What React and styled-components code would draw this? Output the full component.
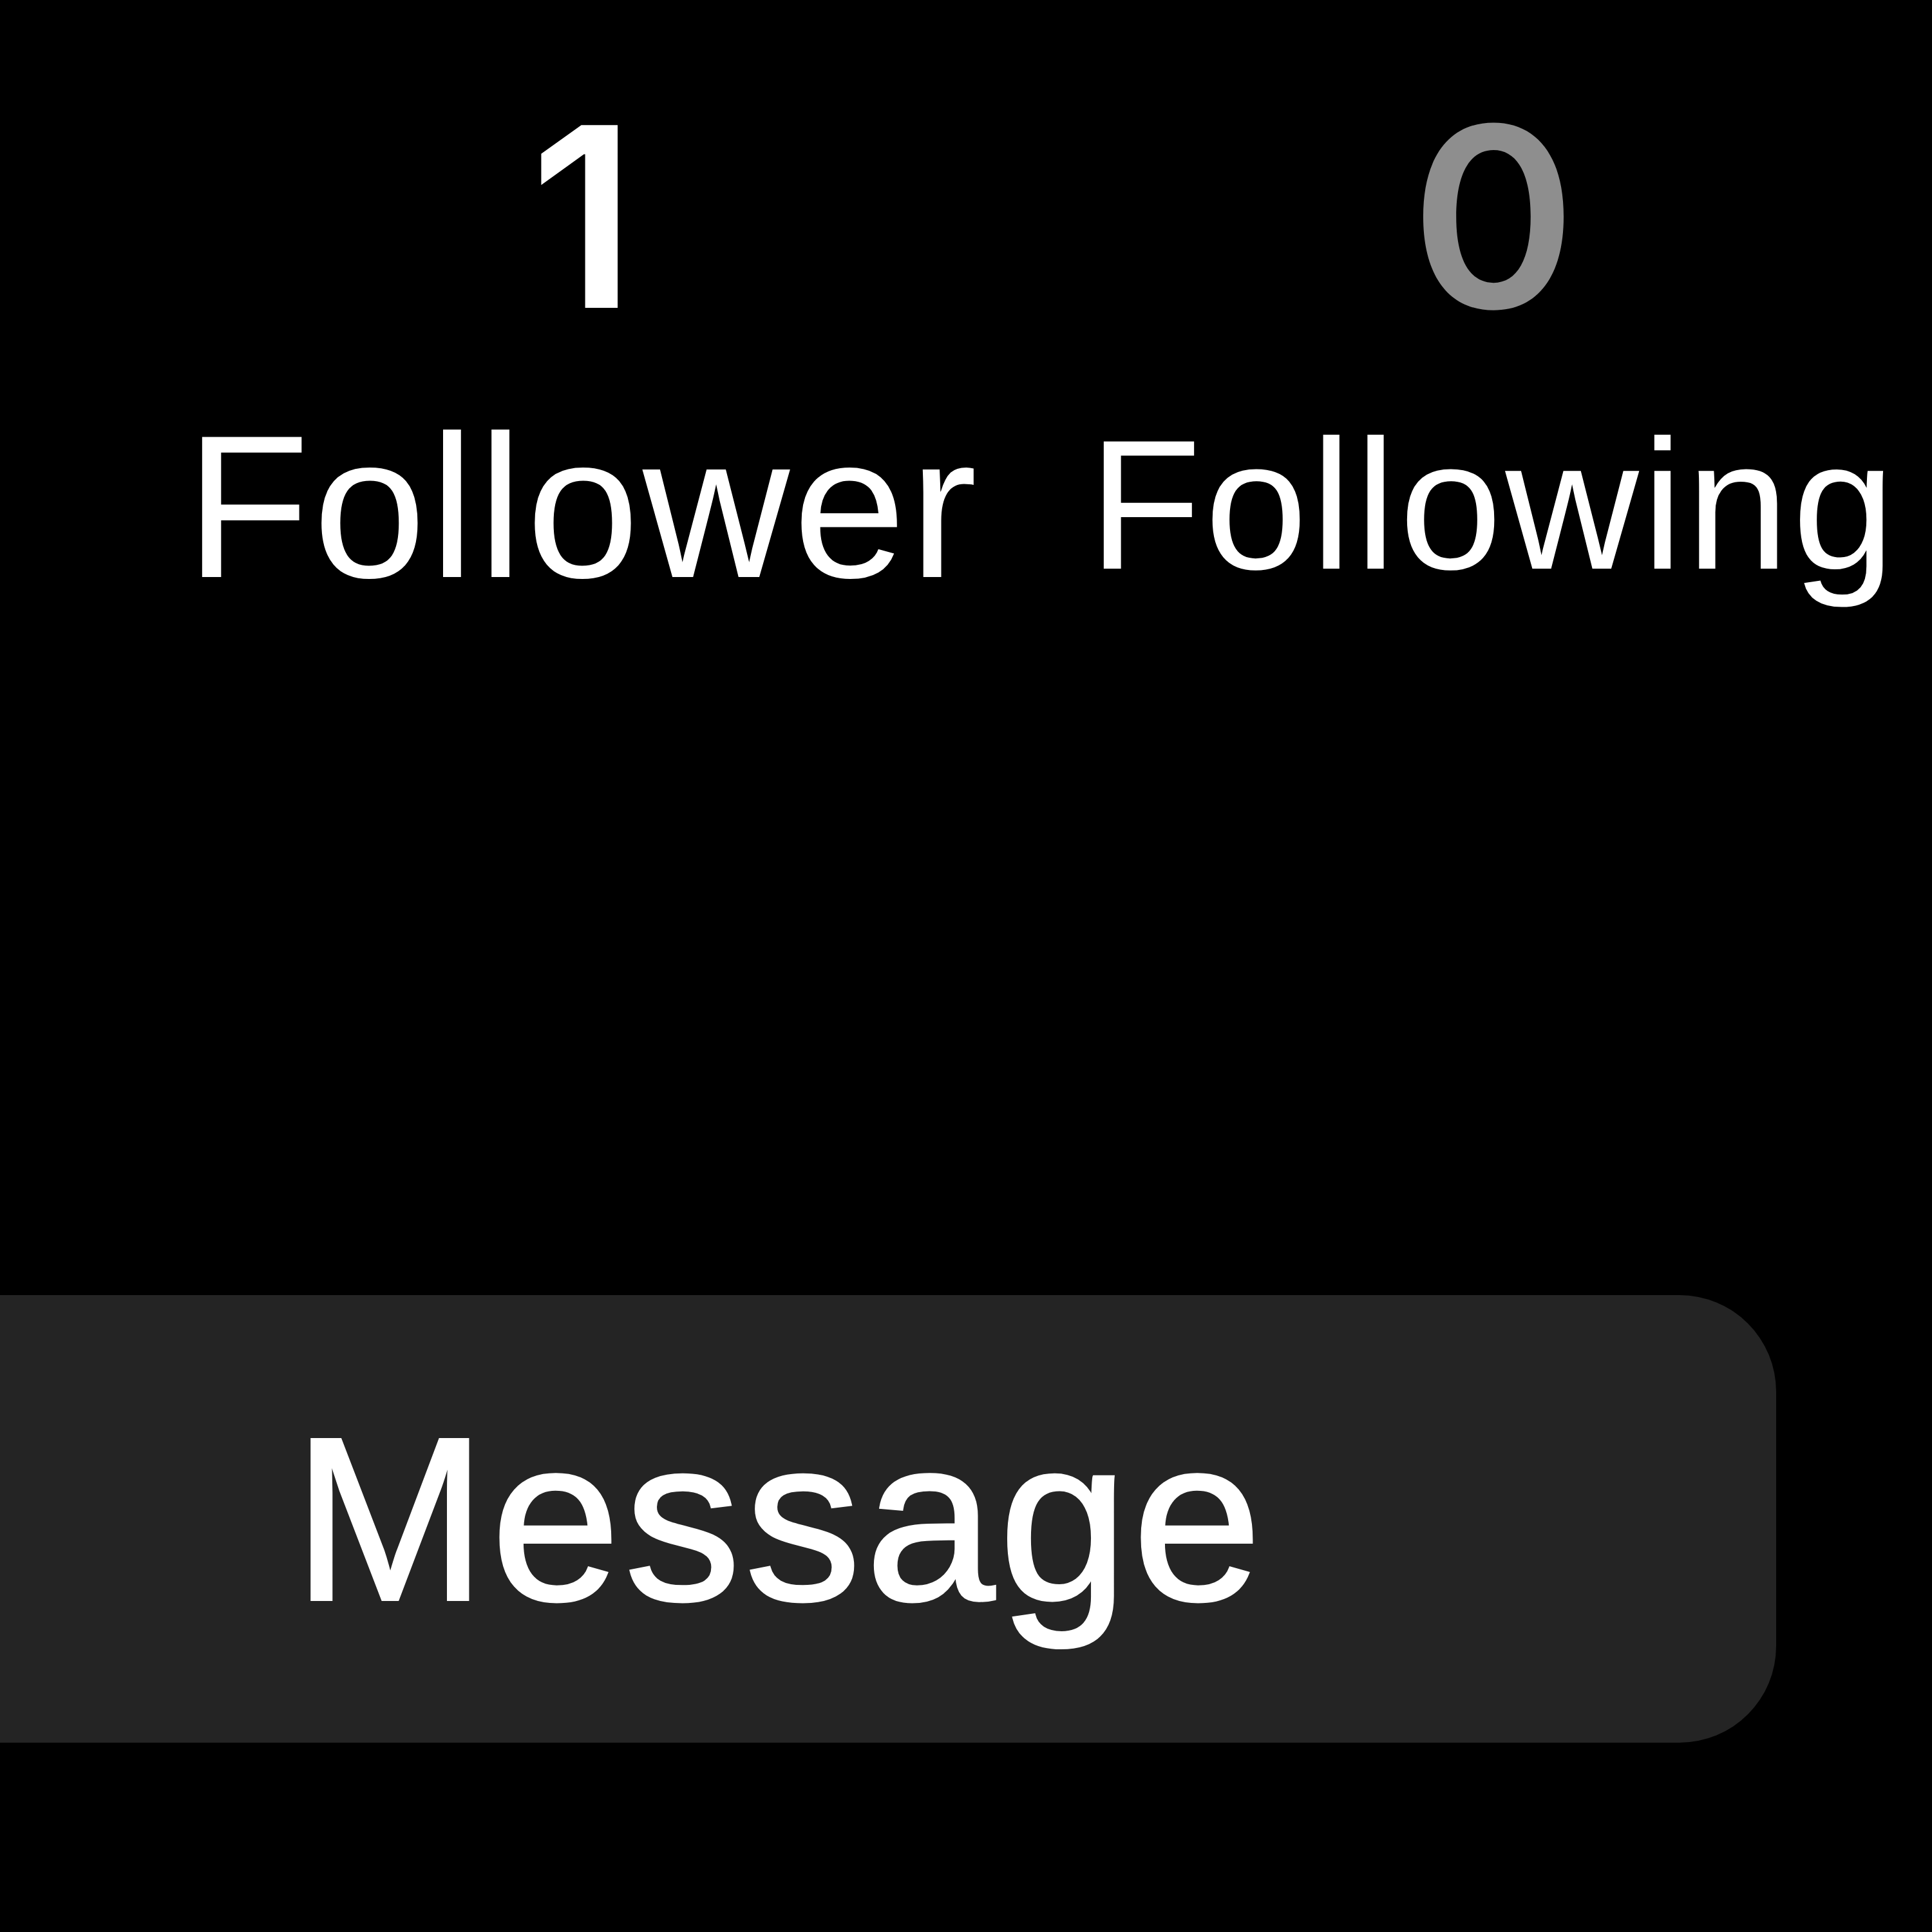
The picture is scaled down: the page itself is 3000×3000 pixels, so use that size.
import styled, { createGlobalStyle } from "styled-components";

const GlobalStyle = createGlobalStyle`
  html, body {
    margin: 0;
    padding: 0;
    background: #000;
    overflow: hidden;
  }
  #root {
    width: 3000px;
    height: 3000px;
    overflow: hidden;
  }
`;

const stats = [
  { value: "1", label: "Follower", muted: false, size: 316, offset: 98 },
  { value: "0", label: "Following", muted: true, size: 287, offset: 109 },
];

const App = () => {
  return (
    <Page>
      <GlobalStyle />
      <Stats>
        {stats.map((s) => (
          <Stat key={s.label}>
            <Count $muted={s.muted}>{s.value}</Count>
            <Label $size={s.size} $offset={s.offset}>
              {s.label}
            </Label>
          </Stat>
        ))}
      </Stats>
      <MessageButton>Message</MessageButton>
    </Page>
  );
};

const Page = styled.div`
  width: 3000px;
  height: 3000px;
  background: #000;
  display: flex;
  flex-direction: column;
  font-family: "Liberation Sans", Arial, sans-serif;
  color: #fff;
`;

const Stats = styled.div`
  display: grid;
  grid-template-columns: 1400px 1400px;
  column-gap: 14px;
  padding-left: 205px;
  padding-top: 141px;
  height: 790px;
  align-items: start;
`;

const Stat = styled.div`
  display: flex;
  flex-direction: column;
  align-items: center;
`;

const Count = styled.div`
  font-family: Inter, "Liberation Sans", sans-serif;
  font-weight: 600;
  font-size: 390px;
  line-height: 1;
  color: ${(p) => (p.$muted ? "#8e8e8e" : "#fff")};
`;

const Label = styled.div`
  font-size: ${(p) => p.$size}px;
  line-height: 1;
  letter-spacing: 5px;
  margin-top: ${(p) => p.$offset}px;
  white-space: nowrap;
`;

const MessageButton = styled.button`
  margin-top: 1080px;
  margin-left: -338px;
  width: 3096px;
  height: 695px;
  flex-shrink: 0;
  border: none;
  border-radius: 150px;
  background: #242424;
  color: #fff;
  font-family: "Liberation Sans", Arial, sans-serif;
  font-size: 362px;
  letter-spacing: 6px;
  line-height: 1;
  -webkit-text-stroke: 4px #fff;
  display: flex;
  align-items: center;
  justify-content: center;
  padding: 0;
  cursor: pointer;
`;

export default App;
